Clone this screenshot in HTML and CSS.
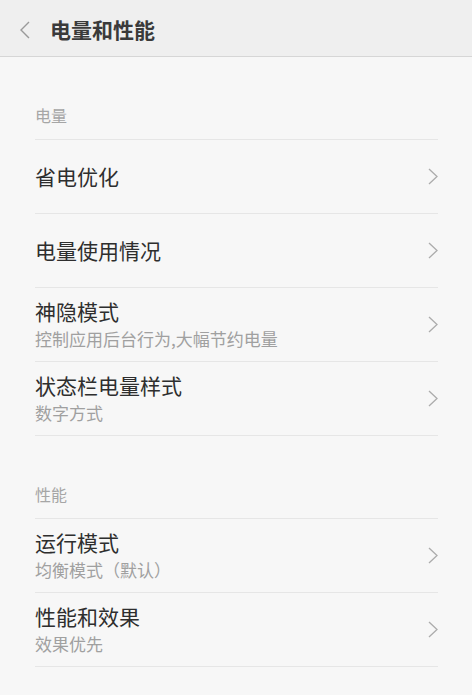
FILE: index.html
```html
<!DOCTYPE html>
<html lang="zh-CN">
<head>
<meta charset="utf-8">
<link rel="stylesheet" href="styles.css">
</head>
<body>
<div class="header">
  <svg class="back" width="11" height="18" viewBox="0 0 11 18"><path d="M10 1 L2 9 L10 17" fill="none" stroke="#9a9a9a" stroke-width="1.4"/></svg>
  <div class="htitle">电量和性能</div>
</div>
<div class="list">
  <div class="label">电量</div>
  <div class="row"><div class="text"><div class="title">省电优化</div></div><svg class="chev" width="10" height="17" viewBox="0 0 10 17"><path d="M1 1 L9 8.5 L1 16" fill="none" stroke="#acacac" stroke-width="1.3"/></svg></div>
  <div class="row"><div class="text"><div class="title">电量使用情况</div></div><svg class="chev" width="10" height="17" viewBox="0 0 10 17"><path d="M1 1 L9 8.5 L1 16" fill="none" stroke="#acacac" stroke-width="1.3"/></svg></div>
  <div class="row"><div class="text"><div class="title">神隐模式</div><div class="sub">控制应用后台行为,大幅节约电量</div></div><svg class="chev" width="10" height="17" viewBox="0 0 10 17"><path d="M1 1 L9 8.5 L1 16" fill="none" stroke="#acacac" stroke-width="1.3"/></svg></div>
  <div class="row"><div class="text"><div class="title">状态栏电量样式</div><div class="sub">数字方式</div></div><svg class="chev" width="10" height="17" viewBox="0 0 10 17"><path d="M1 1 L9 8.5 L1 16" fill="none" stroke="#acacac" stroke-width="1.3"/></svg></div>
  <div class="label">性能</div>
  <div class="row"><div class="text"><div class="title">运行模式</div><div class="sub">均衡模式（默认）</div></div><svg class="chev" width="10" height="17" viewBox="0 0 10 17"><path d="M1 1 L9 8.5 L1 16" fill="none" stroke="#acacac" stroke-width="1.3"/></svg></div>
  <div class="row"><div class="text"><div class="title">性能和效果</div><div class="sub">效果优先</div></div><svg class="chev" width="10" height="17" viewBox="0 0 10 17"><path d="M1 1 L9 8.5 L1 16" fill="none" stroke="#acacac" stroke-width="1.3"/></svg></div>
</div>
</body>
</html>
```
FILE: styles.css
```css
html, body {
  margin: 0;
  padding: 0;
  background: #f7f7f7;
  font-family: "Noto Sans CJK SC", "Noto Sans", sans-serif;
}
.header {
  height: 56px;
  background: #efefef;
  border-bottom: 1px solid #d6d6d6;
  display: flex;
  align-items: center;
  padding-left: 19px;
  box-sizing: content-box;
}
.back {
  display: block;
  margin-top: 3px;
}
.htitle {
  margin-left: 20px;
  font-size: 21px;
  font-weight: bold;
  color: #3a3a3a;
  line-height: 28px;
  margin-top: 2px;
}
.list {
  margin: 0 34px 0 35px;
}
.label {
  padding-top: 46px;
  padding-bottom: 12px;
  line-height: 24px;
  font-size: 16px;
  color: #a6a6a6;
  border-bottom: 1px solid #e6e6e6;
}
.row {
  height: 73px;
  border-bottom: 1px solid #e6e6e6;
  display: flex;
  align-items: center;
  justify-content: space-between;
}
.text {
  padding-bottom: 2px;
}
.title {
  font-size: 21px;
  line-height: 30px;
  color: #2e2e2e;
}
.sub {
  font-size: 17px;
  line-height: 26px;
  color: #a0a0a0;
}
.chev {
  display: block;
}
```
